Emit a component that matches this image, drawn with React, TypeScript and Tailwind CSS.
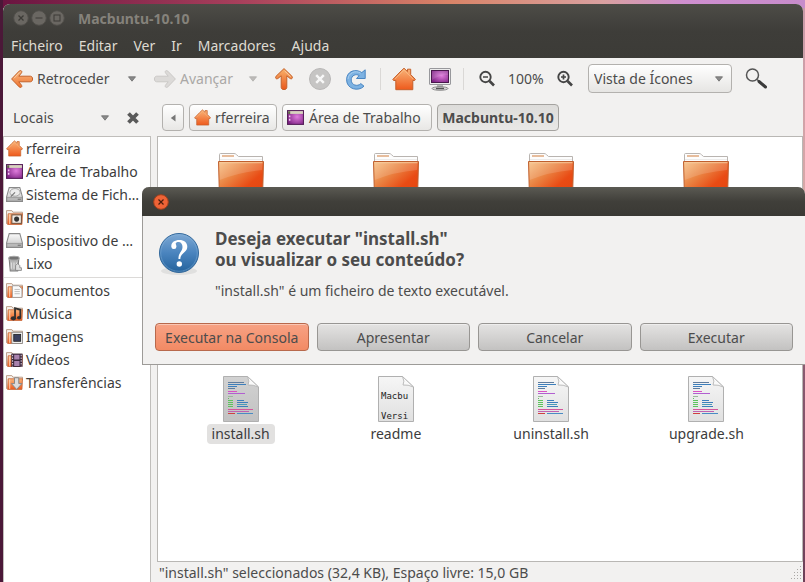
import type { ReactNode } from 'react'
import { useState } from 'react'

// Shared gradients, referenced by id from the icons below
function IconDefs() {
  return (
    <svg width="0" height="0" className="absolute" aria-hidden="true">
      <defs>
        <linearGradient id="orange" x1="0" y1="0" x2="0" y2="1">
          <stop offset="0" stopColor="#f9b57a" />
          <stop offset="1" stopColor="#ee5a1c" />
        </linearGradient>
        <linearGradient id="upArrow" x1="0" y1="0" x2="1" y2="0">
          <stop offset="0" stopColor="#f8b26c" />
          <stop offset="1" stopColor="#e9581c" />
        </linearGradient>
        <linearGradient id="backArrow" x1="0" y1="0" x2="0" y2="1">
          <stop offset="0" stopColor="#f9b981" />
          <stop offset="1" stopColor="#ee7330" />
        </linearGradient>
        <linearGradient id="folderFront" x1="0" y1="0" x2="1" y2="1">
          <stop offset="0" stopColor="#f6c084" />
          <stop offset="0.35" stopColor="#ea8443" />
          <stop offset="0.65" stopColor="#e94b14" />
          <stop offset="1" stopColor="#e2450f" />
        </linearGradient>
        <radialGradient id="purple" cx="0.6" cy="0.45" r="0.7">
          <stop offset="0" stopColor="#df7cdc" />
          <stop offset="1" stopColor="#7a1f80" />
        </radialGradient>
        <linearGradient id="silver" x1="0" y1="0" x2="0" y2="1">
          <stop offset="0" stopColor="#fafafa" />
          <stop offset="1" stopColor="#c4c4c4" />
        </linearGradient>
        <linearGradient id="paper" x1="0" y1="0" x2="0" y2="1">
          <stop offset="0" stopColor="#f6f6f6" />
          <stop offset="1" stopColor="#e0e0e0" />
        </linearGradient>
        <linearGradient id="paperSelected" x1="0" y1="0" x2="0" y2="1">
          <stop offset="0" stopColor="#d2d2d2" />
          <stop offset="1" stopColor="#c2c2c2" />
        </linearGradient>
        <linearGradient id="blue" x1="0" y1="0" x2="0" y2="1">
          <stop offset="0" stopColor="#7fa9d4" />
          <stop offset="0.5" stopColor="#4a84be" />
          <stop offset="1" stopColor="#24629c" />
        </linearGradient>
      </defs>
    </svg>
  )
}

function ArrowIcon({ direction, muted }: { direction: 'left' | 'right' | 'up'; muted?: boolean }) {
  const rotation = { left: 0, right: 180, up: 90 }[direction]
  const fill = direction === 'up' ? 'url(#upArrow)' : 'url(#backArrow)'
  return (
    <svg width="24" height="24" viewBox="0 0 24 24" className="shrink-0">
      <g transform={`rotate(${rotation} 12 12)`}>
        <path
          d="M1.6 12 9.2 4.1c1.7-1.4 3.4.2 2.200 1.900L8.8 9.200h11.600c2.900 0 2.900 5.600 0 5.600H8.800l2.600 3.200c1.200 1.700-.5 3.300-2.200 1.900Z"
          fill={muted ? '#dcdad8' : fill}
          stroke={muted ? '#cbc9c7' : '#c4622a'}
          strokeWidth="1"
          strokeLinejoin="round"
        />
        {!muted && <path d="M4 11.300 9.600 5.400" stroke="#fbd0a6" strokeWidth="1" fill="none" />}
      </g>
    </svg>
  )
}

function HomeIcon({ size }: { size: number }) {
  return (
    <svg width={size} height={size} viewBox="0 0 24 24" className="shrink-0">
      <path
        d="M12 1.200 8 5 .8 12.400l.8 1.100h2.200v9.200h17V13.500h1.800l.8-1.100L18.700 7.600V2.200h-3.200v2.400Z"
        fill="url(#orange)"
        stroke="#c4602c"
        strokeWidth="1"
        strokeLinejoin="round"
      />
      <path d="M3 12 12 3l9 9" fill="none" stroke="#f9c08c" strokeWidth=".7" />
    </svg>
  )
}

function ComputerIcon() {
  return (
    <svg width="24" height="24" viewBox="0 0 24 24">
      <rect x="1.500" y="1.500" width="21" height="16" rx=".5" fill="#ececec" stroke="#98989c" />
      <rect x="3.500" y="3.500" width="17" height="12" fill="url(#purple)" stroke="#48184c" />
      <path d="M4 4h16v4Q11 8 4 13Z" fill="#fff" opacity=".12" />
      <path d="M9 18h6v2.500H9z" fill="#b5b5b5" />
      <ellipse cx="12" cy="21.500" rx="8" ry="1.800" fill="#d5d5d5" stroke="#7a7a7a" strokeWidth=".8" />
      <path d="M8 21.500h8" stroke="#555" strokeWidth="1.400" />
    </svg>
  )
}

function StopIcon() {
  return (
    <svg width="24" height="24" viewBox="0 0 24 24">
      <circle cx="12" cy="12" r="10.500" fill="#c6c5c4" stroke="#b9b8b7" />
      <path d="m8.200 8.200 7.600 7.600m0-7.600-7.600 7.600" stroke="#f7f7f7" strokeWidth="2.400" />
    </svg>
  )
}

function ReloadIcon() {
  return (
    <svg width="24" height="24" viewBox="0 0 24 24">
      <path
        d="M17.800 5.600 21.200 2.800V11.500H12.500L15.200 8.600C12 6.400 7.200 8.400 7.200 13c0 5.200 6.400 7 9.600 3.600l3.200 2.600C14.400 25 2.600 22.200 2.600 12.800 2.600 3.800 12 1.400 17.800 5.600Z"
        fill="#7db2e2"
        stroke="#4a86c2"
        strokeLinejoin="round"
      />
      <path d="M16.500 6C11 3 4.500 6 4 12" fill="none" stroke="#a9cff0" />
    </svg>
  )
}

function ZoomIcon({ plus }: { plus?: boolean }) {
  return (
    <svg width="18" height="18" viewBox="0 0 18 18" fill="none" stroke="#454545">
      <circle cx="7.500" cy="7" r="5.200" strokeWidth="1.900" />
      <path d="M5 7h5" strokeWidth="1.700" />
      {plus && <path d="M7.500 4.500v5" strokeWidth="1.700" />}
      <path d="m11.500 11 4.500 4.500" strokeWidth="2.600" />
    </svg>
  )
}

function SearchIcon() {
  return (
    <svg width="24" height="24" viewBox="0 0 24 24" fill="none">
      <circle cx="8.500" cy="8" r="6" stroke="#555" strokeWidth="1.500" />
      <path d="m13 12.500 2.500 2" stroke="#555" strokeWidth="1.600" />
      <path d="m15 14.500 6.500 5.500" stroke="#3b3b3b" strokeWidth="3" strokeLinecap="round" />
    </svg>
  )
}

function Caret({ muted }: { muted?: boolean }) {
  return (
    <svg width="10" height="6" viewBox="0 0 10 6" className="shrink-0">
      <path d="M1.500.8h7L5 5.200Z" fill={muted ? '#bdbbb9' : '#8a8a8a'} stroke={muted ? '#b0aeac' : '#6a6a6a'} strokeWidth=".8" />
    </svg>
  )
}

function DesktopIcon() {
  return (
    <svg width="17" height="17" viewBox="0 0 16 16" className="shrink-0">
      <rect x=".5" y="1.500" width="15" height="13" fill="url(#purple)" stroke="#56205a" />
      <rect x="1" y="2" width="14" height="2.600" fill="#d7d3be" />
      <path d="M1 2h2v2.600H1z" fill="#66664f" />
      <path d="M2.500 6v5" stroke="#f4c8f4" strokeWidth="1.400" strokeDasharray="1.800 1.400" />
    </svg>
  )
}

function DriveIcon({ disc }: { disc?: boolean }) {
  return (
    <svg width="17" height="17" viewBox="0 0 16 16" className="shrink-0">
      <path d="M3 1.500h10l2.500 9v4H.5v-4Z" fill="url(#silver)" stroke="#8a8a8a" />
      <path d="M.8 10.700h14.400v3.500H.8z" fill="#b9b9b9" stroke="#8a8a8a" strokeWidth=".6" />
      {disc && <ellipse cx="8.500" cy="6" rx="4.800" ry="3.600" fill="#ececec" stroke="#999" strokeWidth=".8" />}
      {disc && <path d="m8.500 6-4 4" stroke="#777" />}
      <path d="M11 12.500h3" stroke="#6f6f6f" />
    </svg>
  )
}

function TrashIcon() {
  return (
    <svg width="17" height="17" viewBox="0 0 16 16" className="shrink-0">
      <path d="M3 4h9l-1 11H4Z" fill="#b4b4b4" stroke="#7e7e7e" />
      <ellipse cx="7.500" cy="3" rx="5" ry="1.800" fill="#737373" stroke="#a5a5a5" />
      <path d="M5 7v6m2.500-6v6M10 7v5" stroke="#e3e3e3" />
      <path d="m9 10 2-2 2 2v2h1.500v2.500H9Z" fill="#ddd" stroke="#777" strokeWidth=".7" />
    </svg>
  )
}

// Small orange folder with an emblem drawn on top of it
function PlaceFolder({ children }: { children?: ReactNode }) {
  return (
    <svg width="17" height="17" viewBox="0 0 16 16" className="shrink-0">
      <path d="M.5 14V1.500h5l1 1.500h9v3" fill="#f6f1ec" stroke="#b99c88" strokeWidth=".9" />
      <path d="M2 4.500h13.500l-.5 10H1.500Z" fill="url(#orange)" stroke="#c8693c" strokeWidth=".8" />
      <path d="M3.500 5v9" stroke="#fbe0ce" strokeWidth=".8" />
      {children}
    </svg>
  )
}

function NetworkIcon() {
  return (
    <PlaceFolder>
      <rect x="5.500" y="5.500" width="9" height="8" fill="#efeae4" stroke="#75543f" />
      <circle cx="10" cy="9.500" r="2.400" fill="#333" />
    </PlaceFolder>
  )
}

function DocumentsIcon() {
  return (
    <PlaceFolder>
      <path d="M6 3.500h6l3 3v8H6Z" fill="#fafafa" stroke="#999" strokeWidth=".8" />
      <path d="M8 7h5M8 9h5M8 11h5" stroke="#b5b5b5" strokeWidth=".8" />
    </PlaceFolder>
  )
}

function MusicIcon() {
  return (
    <PlaceFolder>
      <path d="M8.500 12V3l5 1.500v7" fill="none" stroke="#303030" strokeWidth="1.700" />
      <ellipse cx="7" cy="12.500" rx="2.500" ry="2" fill="#303030" />
      <ellipse cx="12.300" cy="12" rx="2" ry="1.700" fill="#303030" />
    </PlaceFolder>
  )
}

function PicturesIcon() {
  return (
    <PlaceFolder>
      <rect x="5.500" y="4" width="10" height="10.500" fill="#f2f2f2" stroke="#888" strokeWidth=".8" />
      <rect x="7.300" y="6" width="6.500" height="6.500" fill="#3b4160" stroke="#222" strokeWidth=".8" />
    </PlaceFolder>
  )
}

function VideosIcon() {
  return (
    <PlaceFolder>
      <rect x="5" y="2.500" width="10.500" height="12.500" fill="#39263c" />
      <path d="M7.700 3.500h5v4.500h-5zM7.700 9.500h5V14h-5z" fill="#a882ad" />
      <path d="M6.200 3.500v11M14.300 3.500v11" stroke="#d8cada" strokeWidth="1" strokeDasharray="1.400 1.200" />
    </PlaceFolder>
  )
}

function DownloadsIcon() {
  return (
    <PlaceFolder>
      <path d="M8 3.500h4v5.500h3l-5 5.500L5 9h3Z" fill="#dcdcdc" stroke="#858585" strokeWidth=".9" />
    </PlaceFolder>
  )
}

function FolderIcon() {
  return (
    <svg width="48" height="48" viewBox="0 0 48 48">
      <path d="M2.500 10V1.500q0-1 1-1H17q1.500 0 2.500 1.200L21.500 3.500h24V10" fill="#fdfdfd" stroke="#b9b4b0" />
      <path d="M5 3h12" stroke="#dfa77c" strokeWidth="1.600" />
      <path d="M3 6.500h42" stroke="#ecebea" />
      <path d="M1.500 8.500h45L45.500 45.500H2.500Z" fill="url(#folderFront)" stroke="#c0602f" />
      <path d="M2.500 9.500h43l-.4 7.500Q22 19 2.700 27Z" fill="#fff" opacity=".14" />
      <path d="M2.500 9.700h43" stroke="#f8cfa3" strokeWidth=".9" />
    </svg>
  )
}

// y, from x, to x, colour
const scriptLines = [
  [6, 5, 21, '#5f7c9e'], [8, 5, 23, '#3d7fbc'], [10, 5, 14, '#3d7fbc'], [12, 5, 12, '#5f7c9e'],
  [15, 5, 14, '#d94fc4'], [17, 5, 22, '#b25fd0'],
  [20, 5, 10, '#9bb79b'], [22, 5, 6, '#5cc45c'],
  [24, 5, 10, '#5cc45c'], [24, 14, 21, '#3d7fbc'],
  [26, 5, 10, '#5cc45c'], [26, 14, 25, '#3d7fbc'],
  [28, 5, 10, '#5cc45c'], [28, 14, 24, '#4a9bb8'],
  [30, 5, 10, '#5cc45c'], [30, 14, 25, '#3d7fbc'],
  [33, 5, 30, '#d4559c'], [35, 5, 26, '#c060b0'],
  [37, 5, 12, '#d04040'], [37, 14, 30, '#4a8bc4'],
] as const

function FileIcon({ kind, selected }: { kind: string; selected?: boolean }) {
  return (
    <svg width="36" height="46" viewBox="0 0 36 46">
      <path d="M.5.500h24L35.500 11v34.500H.5Z" fill={selected ? 'url(#paperSelected)' : 'url(#paper)'} stroke="#b0b0b0" />
      {kind === 'script' &&
        scriptLines.map(([y, from, to, color]) => (
          <rect key={`${y}-${from}`} x={from} y={y} width={to - from} height="1" fill={color} />
        ))}
      {kind === 'text' && (
        <g fill="#222" fontSize="9" className="font-['DejaVu_Sans_Mono',monospace]">
          <text x="3" y="23">Macbu</text>
          <text x="3" y="43">Versi</text>
        </g>
      )}
      <path d="M24.500.500q2.500 5 .5 8.500 5-.5 10.500 2Z" fill="#fafafa" stroke="#b5b5b5" strokeWidth=".9" />
    </svg>
  )
}

function QuestionIcon() {
  return (
    <svg width="44" height="44" viewBox="0 0 44 44" className="shrink-0">
      <ellipse cx="22" cy="39" rx="18" ry="4" fill="#000" opacity=".07" />
      <circle cx="22" cy="21" r="19.500" fill="url(#blue)" stroke="#34699c" />
      <circle cx="22" cy="21" r="18.300" fill="none" stroke="#8db9de" opacity=".4" />
      <path
        d="M14.300 14.800c-.4-4.300 3.400-6.800 8-6.800 4.800 0 8 2.600 8 6.700 0 5.800-6.800 6.200-7 12.300h-1.800c-.6-5.600 4-7.400 4-12 0-3-1.500-5-4-5-1.600 0-2.800.6-2.800 1.500 0 .8.700 1.400.7 2.800a2.500 2.500 0 0 1-5.100.5Z"
        fill="#fff"
      />
      <circle cx="22.300" cy="32" r="2.700" fill="#fff" />
    </svg>
  )
}

function WindowButton({ kind }: { kind: 'close' | 'minimize' | 'maximize' }) {
  return (
    <button aria-label={kind}>
      <svg width="16" height="16" viewBox="0 0 16 16" fill="none">
        <circle cx="8" cy="8" r="7.300" fill="#6a6762" stroke="#504e4a" />
        {kind === 'close' && <path d="m5.500 5.500 5 5m0-5-5 5" stroke="#3c3b37" strokeWidth="1.300" />}
        {kind === 'minimize' && <path d="M4.500 8h7" stroke="#3c3b37" strokeWidth="1.200" />}
        {kind === 'maximize' && <rect x="5" y="5" width="6" height="6" stroke="#3c3b37" />}
      </svg>
    </button>
  )
}

const menus = ['Ficheiro', 'Editar', 'Ver', 'Ir', 'Marcadores', 'Ajuda']

const places = [
  { label: 'rferreira', icon: <HomeIcon size={17} /> },
  { label: 'Área de Trabalho', icon: <DesktopIcon /> },
  { label: 'Sistema de Fich…', icon: <DriveIcon disc /> },
  { label: 'Rede', icon: <NetworkIcon /> },
  { label: 'Dispositivo de …', icon: <DriveIcon /> },
  { label: 'Lixo', icon: <TrashIcon /> },
]

const bookmarks = [
  { label: 'Documentos', icon: <DocumentsIcon /> },
  { label: 'Música', icon: <MusicIcon /> },
  { label: 'Imagens', icon: <PicturesIcon /> },
  { label: 'Vídeos', icon: <VideosIcon /> },
  { label: 'Transferências', icon: <DownloadsIcon /> },
]

const files = [
  { name: 'install.sh', kind: 'script' },
  { name: 'readme', kind: 'text' },
  { name: 'uninstall.sh', kind: 'script' },
  { name: 'upgrade.sh', kind: 'script' },
]

function PlaceList({ items }: { items: typeof places }) {
  return (
    <ul>
      {items.map((item) => (
        <li key={item.label}>
          <a href="#" className="flex h-[23px] items-center gap-[3px] pl-[2px] whitespace-nowrap text-[#3c3c3c]">
            {item.icon}
            {item.label}
          </a>
        </li>
      ))}
    </ul>
  )
}

function Separator() {
  return <div className="h-[22px] w-px bg-[#dad8d6]" />
}

function Toolbar() {
  return (
    <div className="flex h-[41px] items-center pl-[7px]">
      <button className="flex w-[109px] items-center gap-[3px]">
        <ArrowIcon direction="left" />
        Retroceder
      </button>
      <button className="flex w-[34px] justify-center pr-2" aria-label="Histórico anterior">
        <Caret />
      </button>
      <button className="flex w-[89px] items-center gap-[3px] text-[#aaa8a6]" disabled>
        <ArrowIcon direction="right" muted />
        Avançar
      </button>
      <button className="flex w-[21px] justify-center" aria-label="Histórico seguinte" disabled>
        <Caret muted />
      </button>
      <div className="flex items-center gap-3 pr-3 pl-[9px]">
        <button aria-label="Acima"><ArrowIcon direction="up" /></button>
        <button aria-label="Parar"><StopIcon /></button>
        <button aria-label="Recarregar"><ReloadIcon /></button>
      </div>
      <Separator />
      <div className="flex items-center gap-3 px-[11px]">
        <button aria-label="Pasta pessoal"><HomeIcon size={24} /></button>
        <button aria-label="Computador"><ComputerIcon /></button>
      </div>
      <Separator />
      <div className="flex items-center gap-3 px-[14px]">
        <button aria-label="Diminuir"><ZoomIcon /></button>
        <span className="w-[36px] whitespace-nowrap">100%</span>
        <button aria-label="Aumentar"><ZoomIcon plus /></button>
      </div>
      <label className="relative">
        <select
          aria-label="Vista"
          className="h-[29px] w-[144px] appearance-none rounded-[4px] border border-[#b3b1ae] bg-linear-to-b from-white to-[#e6e5e3] pl-[5px]"
        >
          <option>Vista de Ícones</option>
          <option>Vista de Lista</option>
        </select>
        <span className="pointer-events-none absolute inset-y-0 right-2 flex items-center"><Caret /></span>
      </label>
      <button className="ml-3" aria-label="Procurar"><SearchIcon /></button>
    </div>
  )
}

function LocationBar() {
  const crumb = 'flex h-[27px] items-center rounded-[4px] border border-[#b3b1ae] bg-linear-to-b from-white to-[#e8e7e5] whitespace-nowrap'
  return (
    <div className="flex h-[37px] items-center">
      <div className="flex w-[154px] items-center pl-[10px]">
        <button className="flex w-[97px] items-center justify-between">
          Locais
          <Caret />
        </button>
        <button className="ml-4" aria-label="Fechar painel">
          <svg width="14" height="14" viewBox="0 0 14 14">
            <path d="m2.500 2.500 9 9m0-9-9 9" stroke="#5a5a5a" strokeWidth="3.800" />
          </svg>
        </button>
      </div>
      <nav className="flex gap-[5px] pl-[5px]">
        <button className={`${crumb} w-[22px] justify-center`} aria-label="Anterior">
          <svg width="6" height="8" viewBox="0 0 6 8"><path d="M5.500.500v7L.8 4Z" fill="#777" /></svg>
        </button>
        <button className={`${crumb} w-[88px] gap-1 pl-1`}>
          <HomeIcon size={17} />
          rferreira
        </button>
        <button className={`${crumb} w-[150px] gap-[5px] pl-1`}>
          <DesktopIcon />
          Área de Trabalho
        </button>
        <button className="flex h-[27px] w-[122px] items-center justify-center rounded-[4px] border border-[#a5a3a0] bg-linear-to-b from-[#dddcda] to-[#e9e8e6] font-bold whitespace-nowrap">
          Macbuntu-10.10
        </button>
      </nav>
    </div>
  )
}

function RunDialog() {
  const button = 'h-[28px] rounded-[4px] border whitespace-nowrap shadow-[inset_0_1px_0_rgba(255,255,255,0.4)]'
  return (
    <div role="dialog" aria-labelledby="run-title" className="absolute top-[187px] right-0 left-[142px] rounded-t-[7px] border-b border-l border-[#9d9b98] bg-[#f2f1f0]">
      <div className="-ml-px flex h-[29px] items-center rounded-t-[7px] bg-linear-to-b from-[#5b5a53] via-[#403f3a] to-[#3a3934] pl-[11px]">
        <button aria-label="Fechar">
          <svg width="16" height="16" viewBox="0 0 16 16">
            <circle cx="8" cy="8" r="7.300" fill="#ef6336" stroke="#a2401c" />
            <path d="m5.500 5.500 5 5m0-5-5 5" stroke="#4a1c0c" strokeWidth="1.200" />
          </svg>
        </button>
      </div>
      <div className="flex gap-[14px] pt-3 pl-[14px]">
        <div className="pt-1"><QuestionIcon /></div>
        <div>
          <h2 id="run-title" className="text-[17px] leading-[21px] font-bold">
            Deseja executar "install.sh"
            <br />
            ou visualizar o seu conteúdo?
          </h2>
          <p className="mt-[11px] leading-5">"install.sh" é um ficheiro de texto executável.</p>
        </div>
      </div>
      <div className="grid grid-cols-4 gap-2 px-3 pt-[22px] pb-[13px]">
        <button className={`${button} border-[#b8694c] bg-linear-to-b from-[#f7a284] to-[#f28a64]`}>Executar na Consola</button>
        {['Apresentar', 'Cancelar', 'Executar'].map((label) => (
          <button key={label} className={`${button} border-[#989693] bg-linear-to-b from-[#e4e3e2] to-[#c3c2c1]`}>
            {label}
          </button>
        ))}
      </div>
    </div>
  )
}

export default function App() {
  const [selected, setSelected] = useState('install.sh')

  return (
    <div className="relative flex min-h-screen flex-col bg-[linear-gradient(90deg,#4b1838_3px,transparent_3px),linear-gradient(#0000_8px,#c99aa8_8px,#d8a8a8_190px,#8a5a70_370px,#6e3f58),linear-gradient(90deg,#6a1440,#a8405c_30%,#d98468_56%,#d9a0a0_75%,#cf8fd0_85%,#c78ccb)] pt-1 pr-[2px] pl-[3px] font-['Noto_Sans',sans-serif] text-[14px] text-[#4c4c4c]">
      <IconDefs />
      <div className="flex flex-1 flex-col overflow-hidden rounded-t-[7px] bg-[#f2f1f0]">
        {/* Title bar and menu */}
        <header className="bg-linear-to-b from-[#4d4c47] via-[#3e3d39] to-[#3c3b37]">
          <div className="flex h-7 items-center gap-[2px] pl-[10px]">
            <WindowButton kind="close" />
            <WindowButton kind="minimize" />
            <WindowButton kind="maximize" />
            <h1 className="pl-[11px] font-bold text-[#85827b]">Macbuntu-10.10</h1>
          </div>
          <nav className="flex h-[26px] items-center gap-4 pl-2 text-[#dfdbd2]">
            {menus.map((menu) => (
              <button key={menu}>{menu}</button>
            ))}
          </nav>
        </header>

        <Toolbar />
        <LocationBar />

        <div className="flex flex-1 gap-[6px]">
          {/* Places sidebar */}
          <aside className="w-[148px] shrink-0 border border-b-0 border-[#c0bebb] bg-white">
            <PlaceList items={places} />
            <hr className="mt-[2px] mb-px border-[#dcdad8]" />
            <PlaceList items={bookmarks} />
          </aside>

          <main className="flex flex-1 flex-col">
            <div className="flex-1 border border-[#b9b7b4] bg-white pt-4 pr-[18px] pl-[5px]">
              <div className="grid h-[223px] grid-cols-4 items-start justify-items-center">
                {[1, 2, 3, 4].map((n) => (
                  <FolderIcon key={n} />
                ))}
              </div>
              <div className="grid grid-cols-4 justify-items-center">
                {files.map((file) => (
                  <button key={file.name} onClick={() => setSelected(file.name)} className="flex flex-col items-center gap-[2px] text-[#3c3c3c]">
                    <FileIcon kind={file.kind} selected={file.name === selected} />
                    <span className={`rounded-[4px] px-[5px] leading-5 ${file.name === selected ? 'bg-[#e2e1e0]' : ''}`}>{file.name}</span>
                  </button>
                ))}
              </div>
            </div>
            <footer className="flex h-5 items-center justify-between pl-[2px]">
              <span>"install.sh" seleccionados (32,4 KB), Espaço livre: 15,0 GB</span>
              <svg width="12" height="14" viewBox="0 0 12 14" stroke="#aaa8a5" strokeDasharray="1 2">
                <path d="M9 1.500h3M6 4.500h6M3 7.500h9M3 10.500h9M0 13.500h12" />
              </svg>
            </footer>
          </main>
        </div>
      </div>
      <RunDialog />
    </div>
  )
}
